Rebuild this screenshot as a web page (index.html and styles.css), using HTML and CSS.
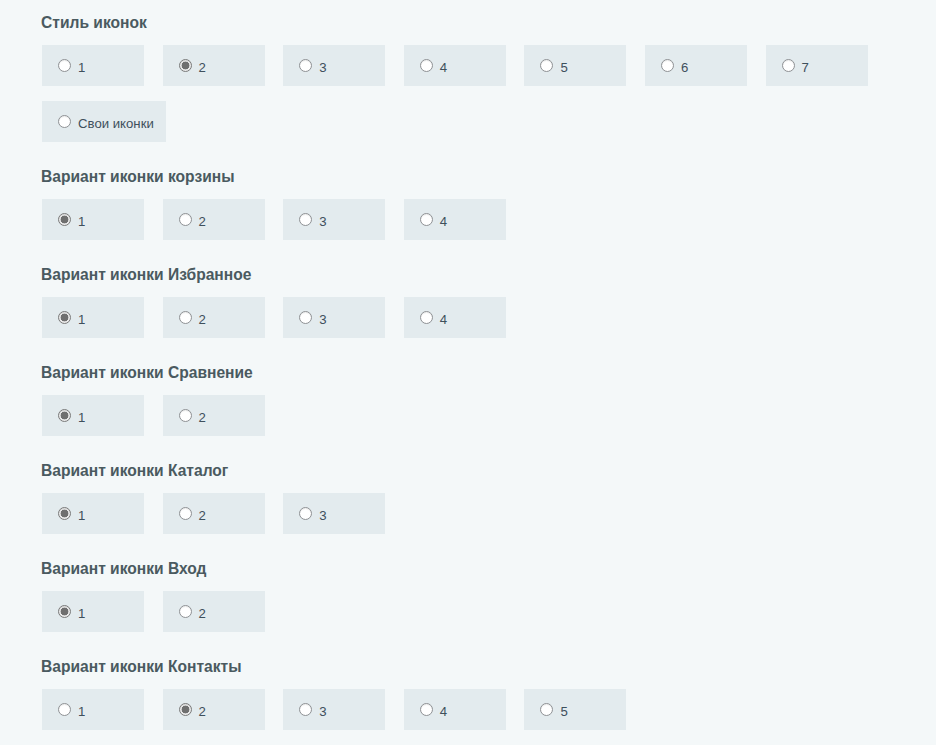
FILE: index.html
```html
<!DOCTYPE html>
<html lang="ru">
<head>
    <meta charset="UTF-8">
    <title>Иконки</title>
    <link rel="stylesheet" href="styles.css">
</head>
<body>
    <div class="settings">
        <div class="group">
            <h3>Стиль иконок</h3>
            <div class="options">
                <label class="opt"><input type="radio" name="style"><span>1</span></label>
                <label class="opt"><input type="radio" name="style" checked><span>2</span></label>
                <label class="opt"><input type="radio" name="style"><span>3</span></label>
                <label class="opt"><input type="radio" name="style"><span>4</span></label>
                <label class="opt"><input type="radio" name="style"><span>5</span></label>
                <label class="opt"><input type="radio" name="style"><span>6</span></label>
                <label class="opt"><input type="radio" name="style"><span>7</span></label>
                <label class="opt wide"><input type="radio" name="style"><span>Свои иконки</span></label>
            </div>
        </div>
        <div class="group">
            <h3>Вариант иконки корзины</h3>
            <div class="options">
                <label class="opt"><input type="radio" name="cart" checked><span>1</span></label>
                <label class="opt"><input type="radio" name="cart"><span>2</span></label>
                <label class="opt"><input type="radio" name="cart"><span>3</span></label>
                <label class="opt"><input type="radio" name="cart"><span>4</span></label>
            </div>
        </div>
        <div class="group">
            <h3>Вариант иконки Избранное</h3>
            <div class="options">
                <label class="opt"><input type="radio" name="fav" checked><span>1</span></label>
                <label class="opt"><input type="radio" name="fav"><span>2</span></label>
                <label class="opt"><input type="radio" name="fav"><span>3</span></label>
                <label class="opt"><input type="radio" name="fav"><span>4</span></label>
            </div>
        </div>
        <div class="group">
            <h3>Вариант иконки Сравнение</h3>
            <div class="options">
                <label class="opt"><input type="radio" name="compare" checked><span>1</span></label>
                <label class="opt"><input type="radio" name="compare"><span>2</span></label>
            </div>
        </div>
        <div class="group">
            <h3>Вариант иконки Каталог</h3>
            <div class="options">
                <label class="opt"><input type="radio" name="catalog" checked><span>1</span></label>
                <label class="opt"><input type="radio" name="catalog"><span>2</span></label>
                <label class="opt"><input type="radio" name="catalog"><span>3</span></label>
            </div>
        </div>
        <div class="group">
            <h3>Вариант иконки Вход</h3>
            <div class="options">
                <label class="opt"><input type="radio" name="login" checked><span>1</span></label>
                <label class="opt"><input type="radio" name="login"><span>2</span></label>
            </div>
        </div>
        <div class="group">
            <h3>Вариант иконки Контакты</h3>
            <div class="options">
                <label class="opt"><input type="radio" name="contacts"><span>1</span></label>
                <label class="opt"><input type="radio" name="contacts" checked><span>2</span></label>
                <label class="opt"><input type="radio" name="contacts"><span>3</span></label>
                <label class="opt"><input type="radio" name="contacts"><span>4</span></label>
                <label class="opt"><input type="radio" name="contacts"><span>5</span></label>
            </div>
        </div>
    </div>
</body>
</html>
```

FILE: styles.css
```css
body {
    margin: 0;
    background: #f4f8f9;
    font-family: "Liberation Sans", Arial, sans-serif;
    color: #44555e;
}
.settings {
    padding: 12px 42px 0 41px;
}
.group {
    margin-bottom: 24px;
}
h3 {
    margin: 0 0 12px 0;
    padding-top: 1px;
    font-size: 15.6px;
    line-height: 20px;
    font-weight: bold;
    color: #4a5a60;
}
.options {
    display: flex;
    flex-wrap: wrap;
    gap: 15px 18.6px;
    padding-left: 1px;
}
.opt {
    display: flex;
    align-items: center;
    box-sizing: border-box;
    width: 102px;
    height: 41px;
    padding: 1px 0 0 16px;
    background: #e3ebee;
    font-size: 13.2px;
    color: #3f505c;
    cursor: pointer;
}
.opt.wide {
    width: 124px;
}
.opt input {
    appearance: none;
    -webkit-appearance: none;
    box-sizing: border-box;
    width: 13px;
    height: 13px;
    margin: 0 7px 2px 0;
    border: 1px solid #8e9194;
    border-radius: 50%;
    background: #fff;
    box-shadow: inset 0 1px 1px rgba(0, 0, 0, 0.08);
}
.opt input:checked {
    border-color: #7a7a7a;
    background: radial-gradient(circle, #6f6f6f 0, #6f6f6f 3.6px, #e8e8e8 4.2px, #f4f4f4 100%);
}
.opt span {
    line-height: 1;
    padding-top: 4px;
}
```
